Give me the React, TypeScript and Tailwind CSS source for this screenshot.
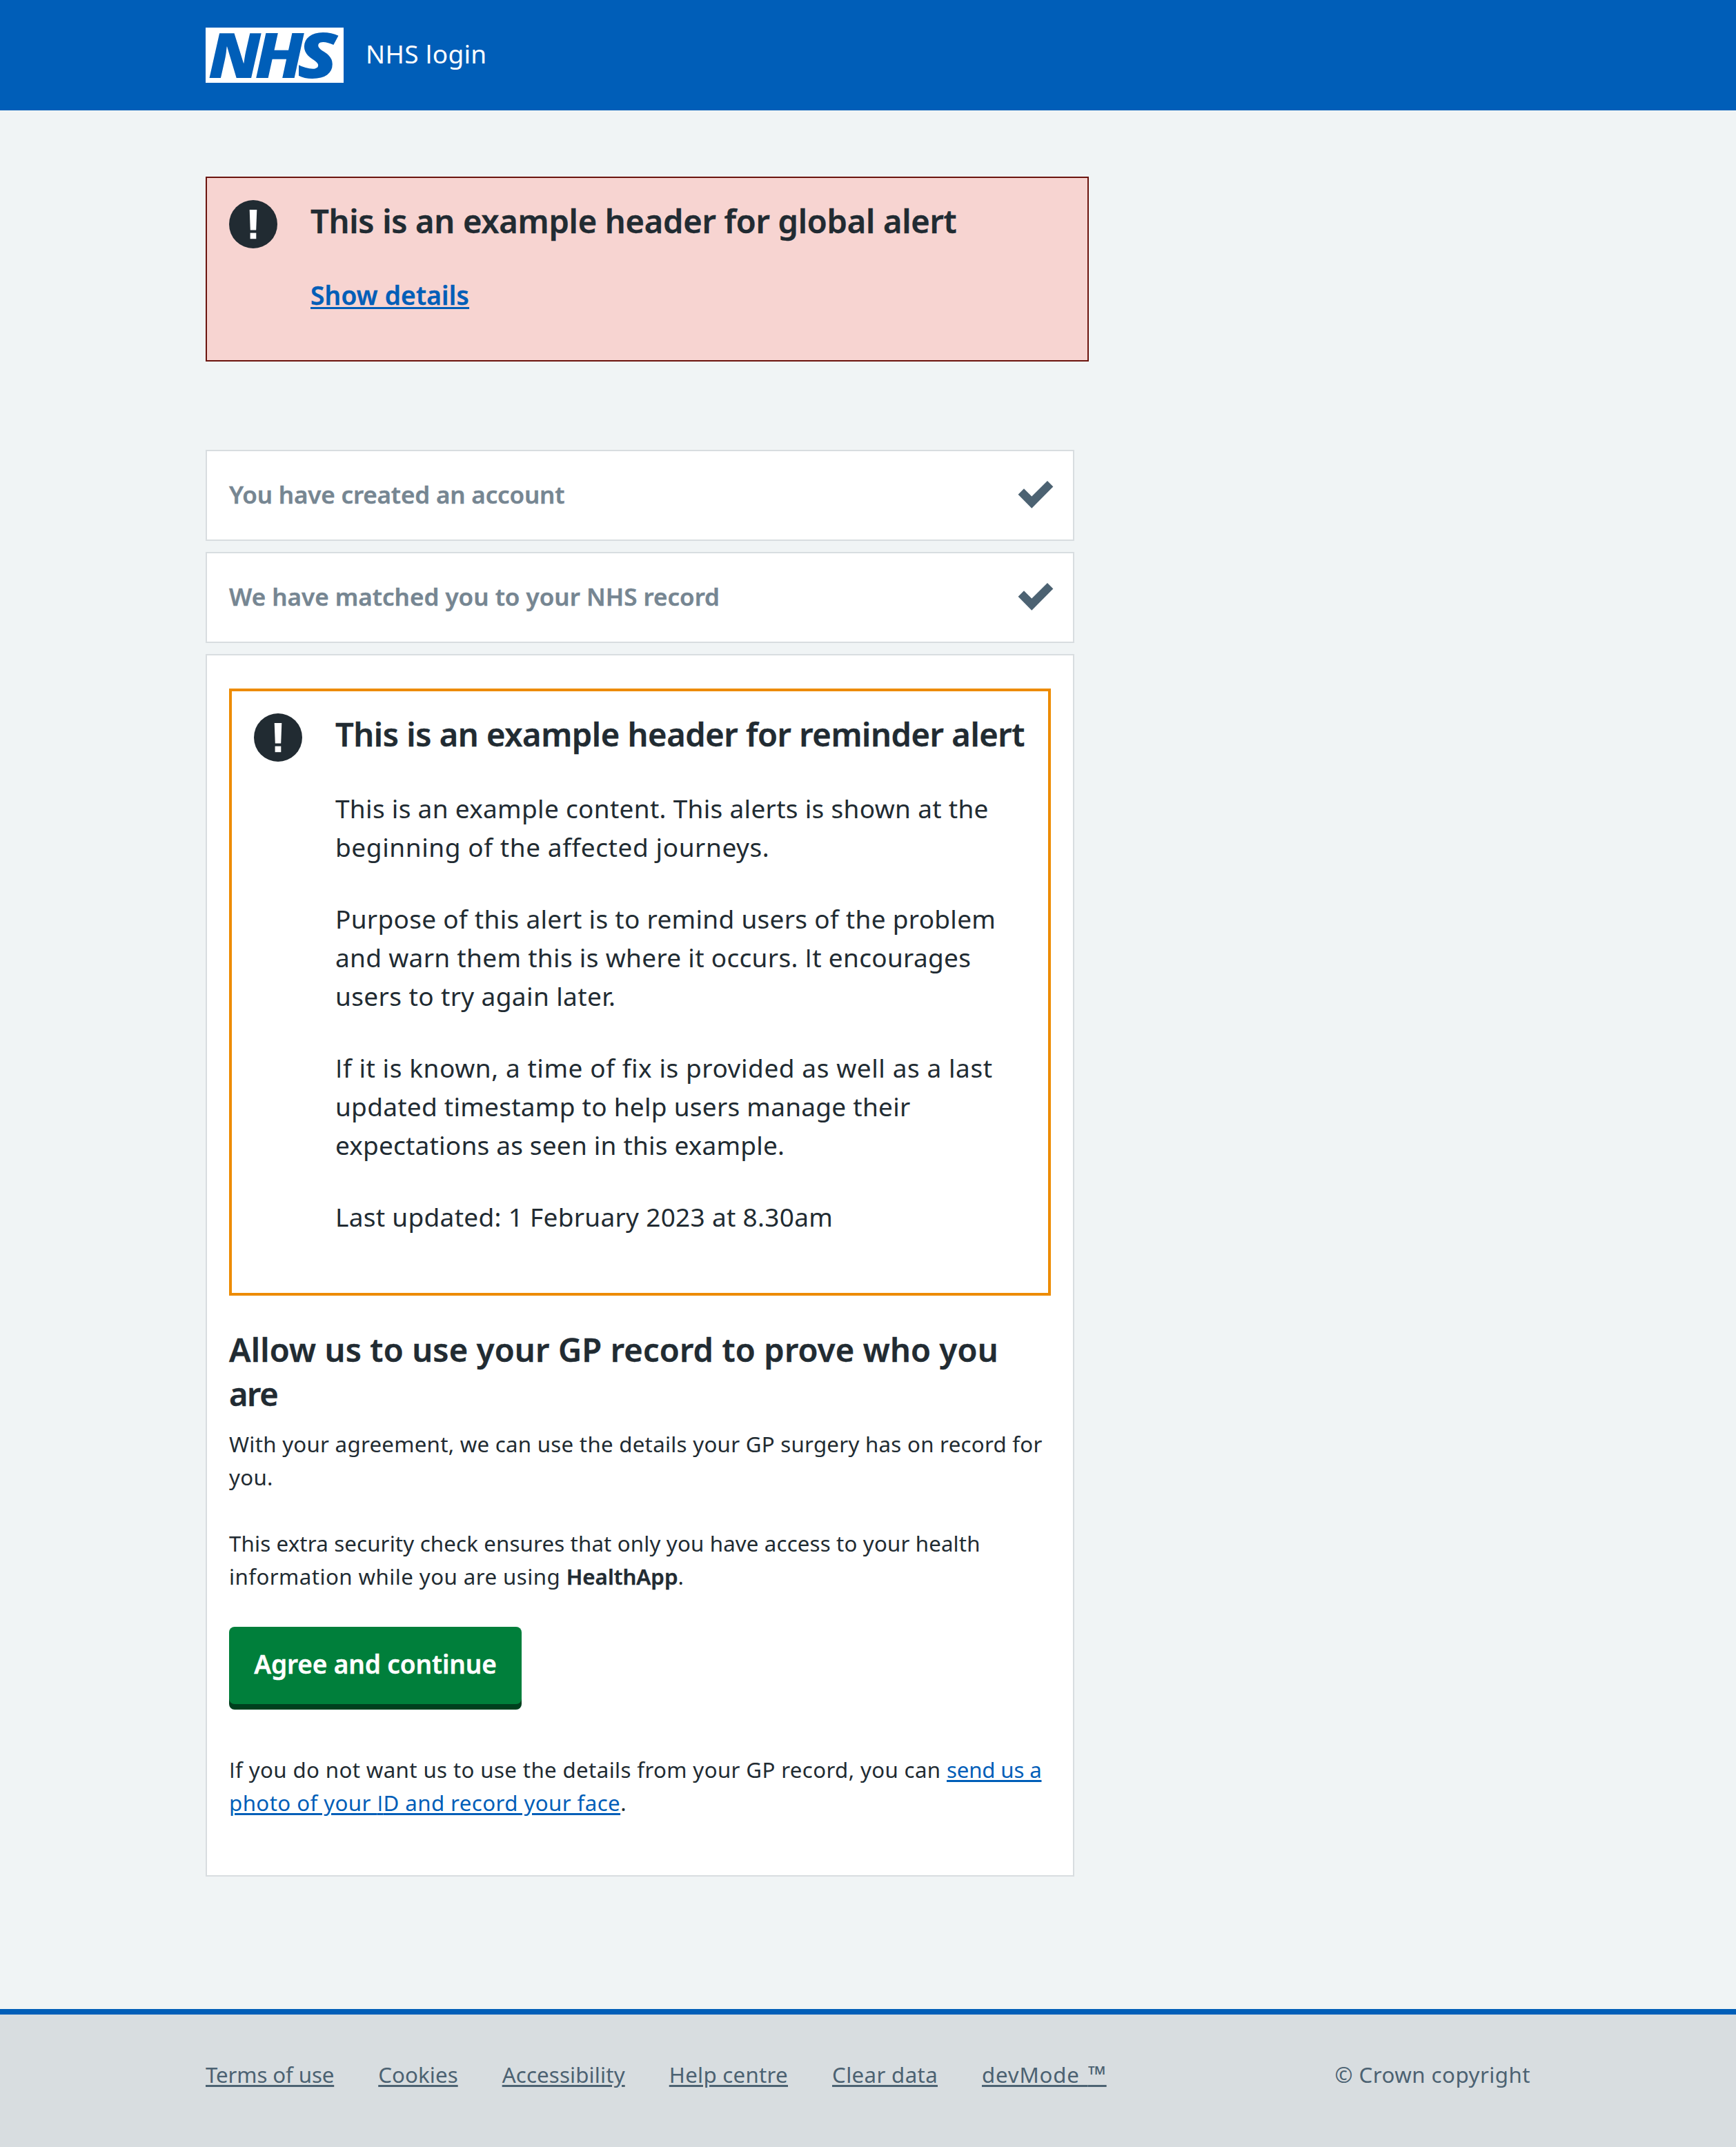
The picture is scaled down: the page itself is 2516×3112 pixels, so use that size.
import type { ReactNode } from "react";

function NhsLogo() {
  return (
    <svg width="200" height="80" viewBox="0 0 200 80" role="img" aria-label="NHS" className="shrink-0">
      <rect width="200" height="80" fill="#ffffff" />
      <g fill="#005eb8" className="font-['Noto_Sans',sans-serif] text-[91px] italic">
        <text transform="translate(4 72.6) scale(1.06 1)" className="font-black">
          N
        </text>
        <text transform="translate(71 72.6) skewX(1.2) scale(1.13 1)" className="font-extrabold">
          H
        </text>
        <text transform="translate(132.8 72.6) scale(1.175 1)" className="font-black">
          S
        </text>
      </g>
    </svg>
  );
}

function WarningIcon() {
  return (
    <svg width="70" height="70" viewBox="0 0 70 70" className="mt-[2px] shrink-0" aria-hidden="true">
      <circle cx="35" cy="35" r="35" fill="#212b32" />
      <polygon points="29.7,14 40.3,14 39.2,43.6 30.8,43.6" fill="#ffffff" />
      <rect x="30.6" y="47.6" width="8.7" height="8.6" fill="#ffffff" />
    </svg>
  );
}

function Tick() {
  return (
    <svg width="52" height="40" viewBox="0 0 52 40" className="mr-[28px] mb-[2px] shrink-0" aria-hidden="true">
      <polygon points="0.6,19.7 9,11.3 20.3,22.6 43,0 51.4,8.4 20.3,39.7" fill="#4c6272" />
    </svg>
  );
}

/* Capital I without slab serifs */
function PlainI() {
  return <span className="font-['Open_Sans',sans-serif]">I</span>;
}

function Line({ t = "", children }: { t?: string; children: ReactNode }) {
  return <span className={`block whitespace-nowrap ${t}`}>{children}</span>;
}

const semibold = "font-semibold [-webkit-text-stroke:0.4px_currentColor]";

function StepPanel({ t, children }: { t: string; children: ReactNode }) {
  return (
    <div className="flex h-[132px] items-center justify-between border-2 border-[#d8dde0] bg-white pl-8">
      <h2 className={`pb-[3px] text-[35px] leading-[48px] whitespace-nowrap text-[#768692] ${semibold} ${t}`}>
        {children}
      </h2>
      <Tick />
    </div>
  );
}

const footerLinks: [string, string][] = [
  ["Terms of use", "tracking-[-0.004em]"],
  ["Cookies", "tracking-[0.0025em]"],
  ["Accessibility", "tracking-[0.0045em]"],
  ["Help centre", "tracking-[0.0087em]"],
  ["Clear data", "tracking-[0.011em]"],
];

const underline = "underline decoration-[3px] underline-offset-[3px]";

export default function App() {
  return (
    <div className="flex min-h-[3112px] flex-col bg-[#f0f4f5] font-['Noto_Sans',sans-serif] text-[#212b32]">
      <header className="h-[160px] bg-[#005eb8]">
        <div className="mx-auto flex h-full w-[1920px] items-center gap-8">
          <NhsLogo />
          <span className="pb-[5px] text-[37px] leading-[56px] tracking-[0.009em] text-white">NHS login</span>
        </div>
      </header>

      <main className="mx-auto w-[1920px] pt-24">
        <section className="flex h-[268px] w-[1280px] gap-12 border-2 border-[#6b140e] bg-[#f7d4d1] px-8 pt-[30px]">
          <WarningIcon />
          <div>
            <h2 className={`text-[47px] leading-[64px] ${semibold}`}>
              <Line t="tracking-[-0.0055em]">This is an example header for global alert</Line>
            </h2>
            <a
              href="#"
              className={`mt-12 inline-block text-[37px] leading-[56px] tracking-[0.0068em] text-[#005eb8] ${semibold} ${underline}`}
            >
              Show details
            </a>
          </div>
        </section>

        <div className="mt-32 flex w-[1259px] flex-col gap-4">
          <StepPanel t="tracking-[-0.0045em]">You have created an account</StepPanel>
          <StepPanel t="tracking-normal">We have matched you to your NHS record</StepPanel>

          <section className="h-[1772px] border-2 border-[#d8dde0] bg-white px-8 pt-12">
            <div className="flex h-[880px] gap-12 border-4 border-[#ed8b00] px-8 pt-[30px]">
              <WarningIcon />
              <div className="flex flex-col gap-12 text-[37px] leading-[56px]">
                <h2 className={`text-[47px] leading-[64px] ${semibold}`}>
                  <Line t="tracking-[-0.0092em]">This is an example header for reminder alert</Line>
                </h2>
                <p>
                  <Line t="tracking-[0.0081em]">This is an example content. This alerts is shown at the</Line>
                  <Line t="tracking-[0.0158em]">beginning of the affected journeys.</Line>
                </p>
                <p>
                  <Line t="tracking-[0.0079em]">Purpose of this alert is to remind users of the problem</Line>
                  <Line t="tracking-[0.0083em]">
                    and warn them this is where it occurs. <PlainI />t encourages
                  </Line>
                  <Line t="tracking-[0.0104em]">users to try again later.</Line>
                </p>
                <p>
                  <Line t="tracking-[0.0153em]">
                    <PlainI />f it is known, a time of fix is provided as well as a last
                  </Line>
                  <Line t="tracking-[0.007em]">updated timestamp to help users manage their</Line>
                  <Line t="tracking-[0.0052em]">expectations as seen in this example.</Line>
                </p>
                <p>
                  <Line t="tracking-[0.008em]">Last updated: 1 February 2023 at 8.30am</Line>
                </p>
              </div>
            </div>

            <h1 className={`mt-[46px] text-[47px] leading-[64px] ${semibold}`}>
              <Line t="tracking-[0.0036em]">Allow us to use your GP record to prove who you</Line>
              <Line t="tracking-[-0.03em]">are</Line>
            </h1>

            <div className="mt-[17px] flex flex-col gap-12 text-[31.25px] leading-[48px]">
              <p>
                <Line t="tracking-[0.0083em]">
                  With your agreement, we can use the details your GP surgery has on record for
                </Line>
                <Line t="tracking-[0.01em]">you.</Line>
              </p>
              <p>
                <Line t="tracking-[0.0045em]">
                  This extra security check ensures that only you have access to your health
                </Line>
                <Line t="tracking-[0.0137em]">
                  information while you are using{" "}
                  <strong className={`tracking-normal ${semibold}`}>HealthApp</strong>.
                </Line>
              </p>
            </div>

            <button
              type="button"
              className={`mt-[49px] flex h-[112px] w-[424px] items-center justify-center rounded-lg bg-[#007f3b] pb-[5px] text-[37px] leading-[56px] tracking-[-0.003em] whitespace-nowrap text-white shadow-[0_8px_0_0_#00401e] ${semibold}`}
            >
              Agree and continue
            </button>

            <p className="mt-[71px] text-[31.25px] leading-[48px]">
              <Line t="tracking-[0.0115em]">
                <PlainI />f you do not want us to use the details from your GP record, you can{" "}
                <a href="#" className={`tracking-[-0.006em] text-[#005eb8] ${underline}`}>
                  send us a
                </a>
              </Line>
              <Line t="tracking-[0.013em]">
                <a href="#" className={`text-[#005eb8] ${underline}`}>
                  photo of your <PlainI />D and record your face
                </a>
                .
              </Line>
            </p>
          </section>
        </div>
      </main>

      <footer className="mt-48 flex-1 border-t-8 border-[#005eb8] bg-[#d8dde0] pt-[63px]">
        <div className="mx-auto flex w-[1920px] justify-between text-[31.25px] leading-[48px] whitespace-nowrap text-[#4c6272]">
          <nav className="flex gap-16">
            {footerLinks.map(([label, t]) => (
              <a key={label} href="#" className={`${t} ${underline}`}>
                {label}
              </a>
            ))}
            <a href="#" className={`tracking-[0.025em] [word-spacing:3px] ${underline}`}>
              devMode <span className="text-[34px] leading-none">™</span>
            </a>
          </nav>
          <span className="tracking-[0.015em]">© Crown copyright</span>
        </div>
      </footer>
    </div>
  );
}
